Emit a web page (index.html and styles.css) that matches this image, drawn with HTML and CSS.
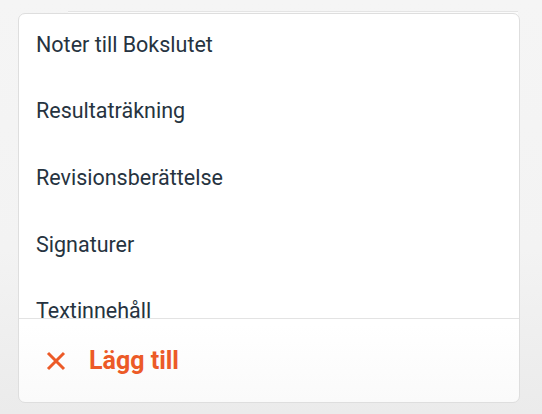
FILE: index.html
```html
<!DOCTYPE html>
<html lang="sv">
<head>
<meta charset="utf-8">
<title>Välj</title>
<link rel="stylesheet" href="styles.css">
</head>
<body>
<div class="stage">
  <div class="menu">
    <div class="menu-scroll">
      <ul class="menu-list">
        <li class="menu-item">Noter till Bokslutet</li>
        <li class="menu-item">Resultaträkning</li>
        <li class="menu-item">Revisionsberättelse</li>
        <li class="menu-item">Signaturer</li>
        <li class="menu-item">Textinnehåll</li>
      </ul>
    </div>
    <div class="menu-footer">
      <button class="add-btn" type="button">
        <svg class="add-icon" viewBox="0 0 22 22" width="22" height="22" aria-hidden="true">
          <path d="M3 3 L19 19 M19 3 L3 19" stroke="currentColor" stroke-width="3" stroke-linecap="butt" fill="none"/>
        </svg>
        <span>Lägg till</span>
      </button>
    </div>
  </div>
</div>
</body>
</html>
```
FILE: styles.css
```css
html, body {
  margin: 0;
  padding: 0;
}
body {
  width: 542px;
  height: 414px;
  overflow: hidden;
  background: linear-gradient(to bottom, #f5f5f5 0%, #f3f3f3 60%, #ebebeb 100%);
  font-family: Roboto, "Liberation Sans", Arial, sans-serif;
}
.stage {
  position: relative;
  padding: 13px 0 0 18px;
}
.stage::before {
  content: "";
  position: absolute;
  top: 11px;
  left: 68px;
  width: 450px;
  height: 4px;
  border-top: 1px solid #e4e4e4;
  background: #fbfbfb;
}
.menu {
  position: relative;
  width: 500px;
  height: 388px;
  border: 1px solid #dedede;
  border-radius: 7px;
  background: linear-gradient(to bottom, #ffffff 0%, #ffffff 80%, #fafafa 100%);
  display: flex;
  flex-direction: column;
  overflow: hidden;
}
.menu-scroll {
  height: 304px;
  overflow: hidden;
  flex: none;
}
.menu-list {
  list-style: none;
  margin: -3px 0 0;
  padding: 0;
}
.menu-item {
  height: 66.667px;
  display: flex;
  align-items: center;
  padding-left: 17px;
  font-size: 21.5px;
  color: #263340;
}
.menu-footer {
  flex: 1;
  border-top: 1px solid #e3e3e3;
  display: flex;
  align-items: center;
  padding-left: 26px;
}
.add-btn {
  display: flex;
  align-items: center;
  gap: 22px;
  border: 0;
  background: transparent;
  padding: 0;
  font-family: inherit;
  font-size: 25px;
  font-weight: 700;
  color: #ec5a27;
  cursor: pointer;
}
.add-icon {
  display: block;
}
```
